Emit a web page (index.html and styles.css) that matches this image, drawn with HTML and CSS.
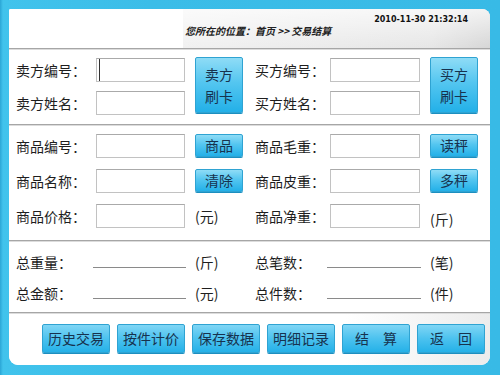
FILE: index.html
```html
<!DOCTYPE html>
<html lang="zh">
<head>
    <meta charset="UTF-8">
    <title>交易结算</title>
    <link rel="stylesheet" href="styles.css">
</head>
<body>
<div class="frame">
    <div class="panel">
        <!-- top bar -->
        <div class="header">
            <div class="clock">2010-11-30 21:32:14</div>
            <div class="where">您所在的位置：首页 &gt;&gt; 交易结算</div>
        </div>

        <!-- seller / buyer -->
        <div class="section party">
            <label class="lbl">卖方编号：</label>
            <input type="text" class="field focused">
            <button class="btn tall">卖方<br>刷卡</button>
            <label class="lbl right">买方编号：</label>
            <input type="text" class="field">
            <button class="btn tall">买方<br>刷卡</button>

            <label class="lbl">卖方姓名：</label>
            <input type="text" class="field">
            <label class="lbl right">买方姓名：</label>
            <input type="text" class="field">
        </div>

        <!-- goods -->
        <div class="section goods">
            <label class="lbl">商品编号：</label>
            <input type="text" class="field">
            <button class="btn">商品</button>
            <label class="lbl right">商品毛重：</label>
            <input type="text" class="field">
            <button class="btn">读秤</button>

            <label class="lbl">商品名称：</label>
            <input type="text" class="field">
            <button class="btn">清除</button>
            <label class="lbl right">商品皮重：</label>
            <input type="text" class="field">
            <button class="btn">多秤</button>

            <label class="lbl">商品价格：</label>
            <input type="text" class="field">
            <span class="unit">(元)</span>
            <label class="lbl right">商品净重：</label>
            <input type="text" class="field">
            <span class="unit low">(斤)</span>
        </div>

        <!-- totals -->
        <div class="section totals">
            <span class="lbl">总重量：</span>
            <span class="blank"></span>
            <span class="unit">(斤)</span>
            <span class="lbl right">总笔数：</span>
            <span class="blank">
            </span>
            <span class="unit">(笔)</span>

            <span class="lbl">总金额：</span>
            <span class="blank"></span>
            <span class="unit">(元)</span>
            <span class="lbl right">总件数：</span>
            <span class="blank"></span>
            <span class="unit">(件)</span>
        </div>

        <!-- actions -->
        <div class="footer">
            <button class="btn act">历史交易</button>
            <button class="btn act">按件计价</button>
            <button class="btn act">保存数据</button>
            <button class="btn act">明细记录</button>
            <button class="btn act">结　算</button>
            <button class="btn act">返　回</button>
        </div>
    </div>
</div>
</body>
</html>
```

FILE: styles.css
```css
* {
    margin: 0;
    padding: 0;
    box-sizing: border-box;
}
body {
    font-family: "Noto Sans CJK SC", "Noto Sans", sans-serif;
    color: #1e1e1e;
    background: #3bbde8;
}
.frame {
    width: 500px;
    height: 375px;
    padding: 9px 10px 10px 9px;
    background: linear-gradient(to right, #2ba6d6 0, #41c3ec 3px, #3bbde8 30%, #38bae6 100%);
}
.panel {
    height: 356px;
    background: #fff;
    border-radius: 2px 8px 9px 9px;
    overflow: hidden;
    display: flex;
    flex-direction: column;
}
.header {
    height: 39px;
    padding-top: 6px;
    display: flex;
    flex-direction: column;
    background:
        linear-gradient(180deg, rgba(255,255,255,0.7) 0, rgba(255,255,255,0) 100%),
        linear-gradient(90deg, #fff 174px, #f1f1f1 174px, #e6e6e6 88%, #d6d6d6 100%);
}
.clock {
    align-self: flex-end;
    margin-right: 22px;
    font-family: "DejaVu Sans", sans-serif;
    font-weight: bold;
    font-size: 8px;
    line-height: 10px;
    color: #111;
}
.where {
    margin-left: 176px;
    font-size: 10px;
    line-height: 12px;
    font-weight: bold;
    font-style: italic;
    color: #222;
}
.section {
    display: grid;
    grid-template-columns: 70px 89px 48px 67px 90px 48px;
    grid-auto-rows: 24px;
    column-gap: 10px;
    padding-left: 7px;
    border-top: 1px solid #a6a6a6;
    box-shadow: inset 0 1px 0 #dcdcdc;
}
.party {
    height: 76px;
    padding-top: 9px;
    row-gap: 9px;
}
.goods {
    height: 116px;
    padding-top: 9px;
    row-gap: 11px;
}
.totals {
    height: 72px;
    padding-top: 9px;
    row-gap: 7px;
}
.lbl {
    font-size: 14px;
    line-height: 24px;
    white-space: nowrap;
    color: #1e1e1e;
}
.lbl.right {
    padding-left: 2px;
}
.field {
    width: 100%;
    height: 24px;
    border: 1px solid #c2c2c2;
    border-top-color: #aaaaaa;
    background: #fff;
    outline: none;
}
.field.focused {
    box-shadow: inset 2px 0 0 #fff, inset 3px 0 0 #333;
}
.unit {
    font-size: 14px;
    line-height: 24px;
    white-space: nowrap;
}
.unit.low {
    padding-top: 3px;
}
.blank {
    height: 18px;
    margin-left: -3px;
    margin-right: -1px;
    border-bottom: 1px solid #8a8a8a;
}
.btn {
    font-family: "Noto Sans CJK SC", "Noto Sans", sans-serif;
    font-size: 14px;
    color: #17324e;
    border: 1px solid #2fa3d2;
    border-radius: 2px;
    background: linear-gradient(180deg, #8fdcf6 0, #54c6f0 45%, #23b0e8 100%);
    box-shadow: 0 1px 0 #1c8fc0;
    cursor: pointer;
    height: 23px;
    line-height: 21px;
}
.btn.tall {
    grid-row: span 2;
    height: 56px;
    margin-top: -1px;
    line-height: 22px;
}
.footer {
    flex: 1;
    display: flex;
    justify-content: flex-end;
    gap: 7px;
    padding: 11px 5px 0 0;
    border-top: 1px solid #a6a6a6;
    background: linear-gradient(90deg, #fff 0, #fff 70%, #ececec 100%);
    box-shadow: inset 0 1px 0 #dcdcdc;
}
.btn.act {
    width: 68px;
    height: 29px;
    line-height: 27px;
    background: linear-gradient(180deg, #80d6f5 0, #4cc2ef 50%, #25b1e8 100%);
}
```
